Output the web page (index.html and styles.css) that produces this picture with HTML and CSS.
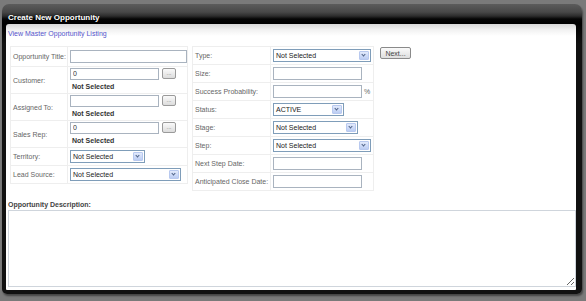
FILE: index.html
```html
<!DOCTYPE html>
<html>
<head>
<meta charset="utf-8">
<link rel="stylesheet" href="styles.css">
</head>
<body>
<div class="frame">
  <div class="header">Create New Opportunity</div>
  <div class="panel">
    <a class="link" href="#">View Master Opportunity Listing</a>
    <div class="forms">
      <table class="tbl left">
        <tr class="r20"><td class="lbl">Opportunity Title:</td><td><input class="inp w117" type="text"></td></tr>
        <tr class="r27"><td class="lbl">Customer:</td><td><div class="pick"><input class="inp w89" type="text" value="0"><span class="dots">...</span></div><div class="ns">Not Selected</div></td></tr>
        <tr class="r27"><td class="lbl">Assigned To:</td><td><div class="pick"><input class="inp w89" type="text"><span class="dots">...</span></div><div class="ns">Not Selected</div></td></tr>
        <tr class="r27"><td class="lbl">Sales Rep:</td><td><div class="pick"><input class="inp w89" type="text" value="0"><span class="dots">...</span></div><div class="ns">Not Selected</div></td></tr>
        <tr class="r18"><td class="lbl">Territory:</td><td><div class="sel w75"><span>Not Selected</span><i class="arr"></i></div></td></tr>
        <tr class="r18"><td class="lbl">Lead Source:</td><td><div class="sel w111"><span>Not Selected</span><i class="arr"></i></div></td></tr>
      </table>
      <table class="tbl right">
        <tr class="r18"><td class="lbl">Type:</td><td><div class="sel w98"><span>Not Selected</span><i class="arr"></i></div></td></tr>
        <tr class="r18"><td class="lbl">Size:</td><td><input class="inp w89" type="text"></td></tr>
        <tr class="r18"><td class="lbl">Success Probability:</td><td class="nw"><input class="inp w89" type="text"><span class="pct">%</span></td></tr>
        <tr class="r18"><td class="lbl">Status:</td><td><div class="sel w71"><span>ACTIVE</span><i class="arr"></i></div></td></tr>
        <tr class="r18"><td class="lbl">Stage:</td><td><div class="sel w85"><span>Not Selected</span><i class="arr"></i></div></td></tr>
        <tr class="r18"><td class="lbl">Step:</td><td><div class="sel w98"><span>Not Selected</span><i class="arr"></i></div></td></tr>
        <tr class="r18"><td class="lbl">Next Step Date:</td><td><input class="inp w89" type="text"></td></tr>
        <tr class="r18"><td class="lbl">Anticipated Close Date:</td><td><input class="inp w89" type="text"></td></tr>
      </table>
      <button class="next" type="button">Next...</button>
    </div>
    <div class="desc-label">Opportunity Description:</div>
    <textarea class="desc"></textarea>
  </div>
</div>
</body>
</html>
```
FILE: styles.css
```css
html, body {
  margin: 0;
  padding: 0;
}
body {
  background: #7a7a7a;
  font-family: "Liberation Sans", Arial, sans-serif;
  font-size: 7px;
  width: 586px;
  height: 301px;
  overflow: hidden;
}
.frame {
  margin: 4px 0 0 2px;
  width: 580px;
  height: 290px;
  box-sizing: border-box;
  padding: 0 6px 4px 4px;
  border-radius: 7px 7px 5px 5px;
  background: linear-gradient(#5c5c5c 0px, #484848 8px, #2c2c2c 12px, #050505 15px, #000 20px, #111 40px, #111 100%);
  box-shadow: 1px 2px 2px rgba(0,0,0,0.45);
  display: flex;
  flex-direction: column;
}
.header {
  height: 20px;
  flex: none;
  color: #fff;
  font-weight: bold;
  font-size: 8px;
  line-height: 8px;
  padding: 10px 0 0 2px;
  box-sizing: border-box;
  text-shadow: 0 0 1px #000;
}
.panel {
  flex: 1;
  background: linear-gradient(#d8d8d8 0px, #f2f2f2 6px, #fff 12px, #fff 100%);
  border-radius: 3px 3px 1px 1px;
  padding: 0 0 0 2px;
  display: flex;
  flex-direction: column;
}
.link {
  color: #5555cc;
  text-decoration: none;
  font-size: 7px;
  line-height: 8px;
  margin-top: 6px;
  height: 8px;
  display: block;
}
.forms {
  display: flex;
  align-items: flex-start;
  margin: 8px 0 0 2px;
  gap: 4px;
}
.tbl {
  border-collapse: collapse;
  border: 1px solid #eeeeee;
}
.tbl td {
  border: 1px solid #eeeeee;
  padding: 0;
  vertical-align: middle;
}
.left { width: 178px; }
.left .lbl { width: 55px; padding-left: 2px; }
.right { width: 182px; }
.right .lbl { width: 75px; padding-left: 2px; }
.lbl { color: #666; white-space: nowrap; }
.nw { white-space: nowrap; }
.r20 { height: 20px; }
.r27 { height: 27px; }
.r18 { height: 18px; }
.left td + td { padding-left: 2px; }
.right td + td { padding-left: 2px; }
.inp {
  display: inline-block;
  vertical-align: middle;
  box-sizing: border-box;
  height: 13px;
  border: 1px solid #a9b3bf;
  background: #fff;
  padding: 0 2px;
  margin: 0;
  font-family: "Liberation Sans", Arial, sans-serif;
  font-size: 7px;
  color: #333;
}
.w117 { width: 117px; }
.w89 { width: 89px; }
.pick {
  display: flex;
  align-items: center;
  gap: 3px;
  margin-top: 0;
}
.pick .inp { height: 12px; }
.dots {
  display: inline-block;
  box-sizing: border-box;
  width: 14px;
  height: 11px;
  border: 1px solid #9a9a9a;
  border-radius: 2px;
  background: linear-gradient(#fafafa, #dcdcdc);
  color: #777;
  font-size: 6px;
  line-height: 8px;
  text-align: center;
}
.ns {
  font-weight: bold;
  color: #333;
  padding-left: 2px;
  line-height: 11px;
  height: 11px;
  margin-top: 1px;
  margin-bottom: 1px;
}
.sel {
  display: flex;
  align-items: center;
  justify-content: space-between;
  box-sizing: border-box;
  height: 13px;
  border: 1px solid #7f9db9;
  background: #fff;
  padding: 0 1px 0 2px;
  color: #222;
}
.w75 { width: 75px; }
.w111 { width: 111px; }
.w98 { width: 98px; }
.w71 { width: 71px; }
.w85 { width: 85px; }
.arr {
  position: relative;
  width: 10px;
  height: 9px;
  box-sizing: border-box;
  border: 1px solid #b8c9ef;
  border-radius: 1px;
  background: linear-gradient(#e2eafc, #bccdf3);
}
.arr::after {
  content: "";
  position: absolute;
  left: 2px;
  top: 1px;
  width: 2px;
  height: 2px;
  border-right: 1px solid #4d6185;
  border-bottom: 1px solid #4d6185;
  transform: rotate(45deg);
}
.pct { color: #666; margin-left: 2px; vertical-align: middle; }
.next {
  margin: 1px 0 0 2px;
  height: 12px;
  width: 31px;
  padding: 0;
  border: 1px solid #8a8a8a;
  border-radius: 2px;
  background: linear-gradient(#fafafa, #dedede);
  font-family: "Liberation Sans", Arial, sans-serif;
  font-size: 7px;
  color: #444;
  line-height: 9px;
}
.desc-label {
  font-weight: bold;
  color: #444;
  margin-top: 10px;
  line-height: 8px;
  height: 8px;
}
.desc {
  display: block;
  box-sizing: border-box;
  margin: 1px 0 0 0;
  width: 568px;
  height: 77px;
  border: 1px solid #cfd5dc;
  resize: both;
  padding: 0;
}
```
